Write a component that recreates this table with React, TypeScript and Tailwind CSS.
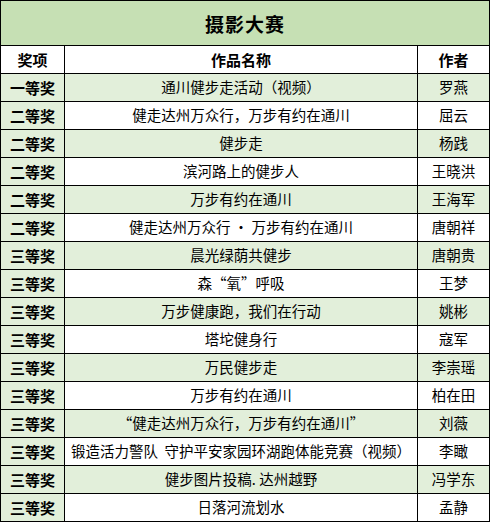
const rows: [string, string, string][] = [
  ["一等奖", "通川健步走活动（视频）", "罗燕"],
  ["二等奖", "健走达州万众行，万步有约在通川", "屈云"],
  ["二等奖", "健步走", "杨践"],
  ["二等奖", "滨河路上的健步人", "王晓洪"],
  ["二等奖", "万步有约在通川", "王海军"],
  ["二等奖", "健走达州万众行 · 万步有约在通川", "唐朝祥"],
  ["三等奖", "晨光绿荫共健步", "唐朝贵"],
  ["三等奖", "森“氧”呼吸", "王梦"],
  ["三等奖", "万步健康跑，我们在行动", "姚彬"],
  ["三等奖", "塔坨健身行", "寇军"],
  ["三等奖", "万民健步走", "李崇瑶"],
  ["三等奖", "万步有约在通川", "柏在田"],
  ["三等奖", "“健走达州万众行，万步有约在通川”", "刘薇"],
  ["三等奖", "锻造活力警队  守护平安家园环湖跑体能竞赛（视频）", "李瞰"],
  ["三等奖", "健步图片投稿. 达州越野", "冯学东"],
  ["三等奖", "日落河流划水", "孟静"],
]

export default function App() {
  return (
    <div className="bg-white w-[491px] h-[523px] font-['Noto_Sans_CJK_SC',sans-serif] text-black">
      <table className="border-collapse table-fixed w-[489px] text-[14.5px] leading-none">
        <colgroup>
          <col className="w-[64px]" />
          <col className="w-[353px]" />
          <col className="w-[72px]" />
        </colgroup>
        <tbody>
          {/* 标题 */}
          <tr className="h-[45px] bg-[#c6e0b4]">
            <td colSpan={3} className="border border-black text-center text-[19px] font-bold tracking-[1px]">
              摄影大赛
            </td>
          </tr>
          <tr className="h-[28px] bg-white font-bold text-[15px]">
            <td className="border border-black text-center">奖项</td>
            <td className="border border-black text-center">作品名称</td>
            <td className="border border-black text-center">作者</td>
          </tr>
          {rows.map((r, i) => (
            <tr key={i} className={i % 2 === 0 ? "h-[28px] bg-[#e2efda]" : "h-[28px] bg-white"}>
              <td className="border border-black text-center font-bold text-[15px] bg-[#e2efda]">{r[0]}</td>
              <td className="border border-black text-center whitespace-pre">{r[1]}</td>
              <td className="border border-black text-center">{r[2]}</td>
            </tr>
          ))}
        </tbody>
      </table>
    </div>
  )
}
